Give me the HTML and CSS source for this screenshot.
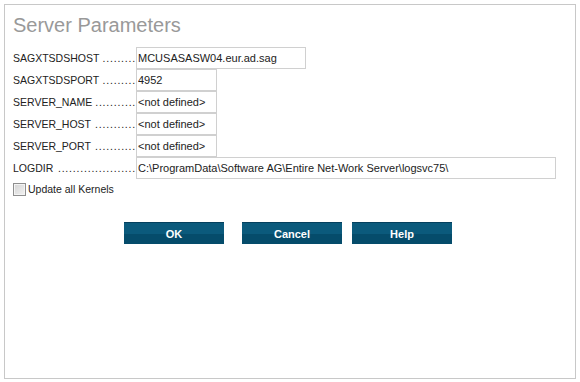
FILE: index.html
```html
<!DOCTYPE html>
<html lang="en">
<head>
  <meta charset="UTF-8">
  <title>Server Parameters</title>
  <link rel="stylesheet" href="styles.css">
</head>
<body>
  <div class="frame">
    <h1>Server Parameters</h1>

    <form class="params">
      <div class="row">
        <label class="key">SAGXTSDSHOST<span class="dots">.........</span></label>
        <input class="val host" type="text" value="MCUSASASW04.eur.ad.sag">
      </div>
      <div class="row">
        <label class="key">SAGXTSDSPORT<span class="dots">.........</span></label>
        <input class="val short" type="text" value="4952">
      </div>
      <div class="row">
        <label class="key">SERVER_NAME<span class="dots">...........</span></label>
        <input class="val short" type="text" value="&lt;not defined&gt;">
      </div>
      <div class="row">
        <label class="key">SERVER_HOST<span class="dots">...........</span></label>
        <input class="val short" type="text" value="&lt;not defined&gt;">
      </div>
      <div class="row">
        <label class="key">SERVER_PORT<span class="dots">...........</span></label>
        <input class="val short" type="text" value="&lt;not defined&gt;">
      </div>
      <div class="row">
        <label class="key">LOGDIR<span class="dots">.....................</span></label>
        <input class="val long" type="text" value="C:\ProgramData\Software AG\Entire Net-Work Server\logsvc75\">
      </div>
      <div class="check">
        <input type="checkbox" id="kernels">
        <label for="kernels">Update all Kernels</label>
      </div>

      <div class="buttons">
        <button type="button" class="ok">OK</button>
        <button type="button" class="cancel">Cancel</button>
        <button type="button" class="help">Help</button>
      </div>
    </form>
  </div>
</body>
</html>
```

FILE: styles.css
```css
body {
  margin: 0;
  padding: 4px;
  font-family: "Liberation Sans", Arial, sans-serif;
  font-size: 10.5px;
  color: #222;
  background: #fff;
}

.frame {
  box-sizing: border-box;
  width: 572px;
  height: 375px;
  border: 1px solid #c8c8c8;
  padding: 0 8px;
}

h1 {
  margin: 9px 0 11px;
  font-size: 20px;
  font-weight: normal;
  color: #999;
  line-height: 22px;
}

.row {
  display: flex;
  align-items: center;
  height: 22px;
}

.key {
  display: flex;
  min-width: 123px;
  white-space: nowrap;
}

.dots {
  margin-left: auto;
  padding-left: 3px;
  letter-spacing: 0.8px;
}

.val {
  box-sizing: border-box;
  height: 22px;
  margin: 0;
  padding: 0 1px;
  border: 1px solid #d0d0d0;
  font-family: inherit;
  font-size: 11px;
  color: #222;
  outline: none;
}

.host { width: 170px; }
.short { width: 81px; }
.long { width: 420px; }

.check {
  display: flex;
  align-items: center;
  height: 20px;
}

.check input {
  appearance: none;
  box-sizing: border-box;
  width: 13px;
  height: 13px;
  margin: 0 2px 0 0;
  border: 1px solid #8f8f8f;
  box-shadow: inset 0 0 0 1px #f4f4f4;
  background: linear-gradient(135deg, #d4d4d4, #f2f2f2);
}

.buttons {
  display: flex;
  margin: 23px 0 0 111px;
}

.buttons button {
  width: 100px;
  height: 22px;
  margin-right: 18px;
  border: none;
  border-top: 1px solid #04405e;
  background: linear-gradient(#0b5a7c 50%, #054c6b 50%);
  color: #fff;
  font-family: inherit;
  font-size: 11px;
  font-weight: bold;
  padding: 0;
}

.buttons .cancel {
  margin-right: 10px;
}
```
